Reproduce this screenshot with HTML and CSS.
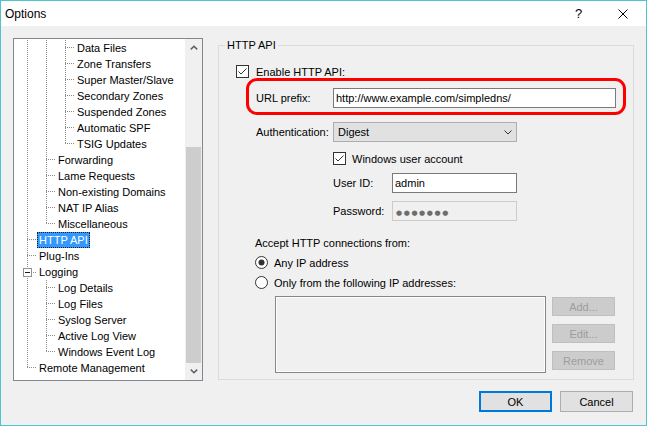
FILE: index.html
```html
<!DOCTYPE html>
<html lang="en">

<head>
    <meta charset="UTF-8">
    <meta name="viewport" content="width=device-width, initial-scale=1.0">
    <title>Options</title>
    <link rel="stylesheet" href="styles.css">
</head>

<body>
    <div class="window">
        <div class="titlebar">
            <span class="title">Options</span>
            <div class="caption-buttons">
                <span class="caption-btn help">?</span>
                <span class="caption-btn close">
                    <svg width="10" height="10" viewBox="0 0 10 10">
                        <path d="M0.5 0.5L9.5 9.5M9.5 0.5L0.5 9.5" stroke="#000" stroke-width="1" fill="none" />
                    </svg>
                </span>
            </div>
        </div>

        <div class="client">
            <div class="main">
                <!-- options tree -->
                <div class="tree">
                    <div class="tree-items">
                        <div class="row"><span class="pipe"></span><span class="pipe"></span><span class="branch"></span><span class="label">Data Files</span></div>
                        <div class="row"><span class="pipe"></span><span class="pipe"></span><span class="branch"></span><span class="label">Zone Transfers</span></div>
                        <div class="row"><span class="pipe"></span><span class="pipe"></span><span class="branch"></span><span class="label">Super Master/Slave</span></div>
                        <div class="row"><span class="pipe"></span><span class="pipe"></span><span class="branch"></span><span class="label">Secondary Zones</span></div>
                        <div class="row"><span class="pipe"></span><span class="pipe"></span><span class="branch"></span><span class="label">Suspended Zones</span></div>
                        <div class="row"><span class="pipe"></span><span class="pipe"></span><span class="branch"></span><span class="label">Automatic SPF</span></div>
                        <div class="row"><span class="pipe"></span><span class="pipe"></span><span class="branch last"></span><span class="label">TSIG Updates</span></div>
                        <div class="row"><span class="pipe"></span><span class="branch"></span><span class="label">Forwarding</span></div>
                        <div class="row"><span class="pipe"></span><span class="branch"></span><span class="label">Lame Requests</span></div>
                        <div class="row"><span class="pipe"></span><span class="branch"></span><span class="label">Non-existing Domains</span></div>
                        <div class="row"><span class="pipe"></span><span class="branch"></span><span class="label">NAT IP Alias</span></div>
                        <div class="row"><span class="pipe"></span><span class="branch last"></span><span class="label">Miscellaneous</span></div>
                        <div class="row"><span class="branch"></span><span class="label selected">HTTP API</span></div>
                        <div class="row"><span class="branch"></span><span class="label">Plug-Ins</span></div>
                        <div class="row">
                            <span class="toggle">
                                <svg width="9" height="9" viewBox="0 0 9 9">
                                    <rect x="0.5" y="0.5" width="8" height="8" fill="#fff" stroke="#919191" />
                                    <path d="M2 4.5H7" stroke="#1a1a1a" />
                                </svg>
                            </span>
                            <span class="label">Logging</span>
                        </div>
                        <div class="row"><span class="pipe"></span><span class="branch"></span><span class="label">Log Details</span></div>
                        <div class="row"><span class="pipe"></span><span class="branch"></span><span class="label">Log Files</span></div>
                        <div class="row"><span class="pipe"></span><span class="branch"></span><span class="label">Syslog Server</span></div>
                        <div class="row"><span class="pipe"></span><span class="branch"></span><span class="label">Active Log View</span></div>
                        <div class="row"><span class="pipe"></span><span class="branch last"></span><span class="label">Windows Event Log</span></div>
                        <div class="row"><span class="branch last"></span><span class="label">Remote Management</span></div>
                    </div>
                    <div class="scrollbar">
                        <div class="sb-btn">
                            <svg width="8" height="5" viewBox="0 0 8 5">
                                <path d="M0.8 4.4L4 1.2L7.2 4.4" stroke="#606060" stroke-width="1.5" fill="none" />
                            </svg>
                        </div>
                        <div class="sb-track">
                            <div class="sb-thumb"></div>
                        </div>
                        <div class="sb-btn">
                            <svg width="8" height="5" viewBox="0 0 8 5">
                                <path d="M0.8 0.6L4 3.8L7.2 0.6" stroke="#606060" stroke-width="1.5" fill="none" />
                            </svg>
                        </div>
                    </div>
                </div>

                <!-- HTTP API page -->
                <div class="group">
                    <div class="group-title">HTTP API</div>

                    <div class="check-row enable">
                        <svg class="checkbox" width="13" height="13" viewBox="0 0 13 13">
                            <rect x="0.5" y="0.5" width="12" height="12" fill="#fff" stroke="#333" />
                            <path d="M2.5 6.5L5 9L10.5 3.5" stroke="#333" fill="none" />
                        </svg>
                        <span>Enable HTTP API:</span>
                    </div>

                    <div class="url-box">
                        <span class="field-label">URL prefix:</span>
                        <div class="textbox url">http://www.example.com/simpledns/</div>
                    </div>

                    <div class="field-row auth">
                        <span class="field-label">Authentication:</span>
                        <div class="combo">
                            <span>Digest</span>
                            <svg width="8" height="5" viewBox="0 0 8 5">
                                <path d="M0.5 0.5L4 4L7.5 0.5" stroke="#333" fill="none" />
                            </svg>
                        </div>
                    </div>

                    <div class="sub">
                        <div class="check-row windows">
                            <svg class="checkbox" width="13" height="13" viewBox="0 0 13 13">
                                <rect x="0.5" y="0.5" width="12" height="12" fill="#fff" stroke="#333" />
                                <path d="M2.5 6.5L5 9L10.5 3.5" stroke="#333" fill="none" />
                            </svg>
                            <span>Windows user account</span>
                        </div>
                        <div class="field-row">
                            <span class="field-label short">User ID:</span>
                            <div class="textbox user">admin</div>
                        </div>
                        <div class="field-row">
                            <span class="field-label short">Password:</span>
                            <div class="textbox user disabled"><span class="dots">●●●●●●●</span></div>
                        </div>
                    </div>

                    <div class="accept">Accept HTTP connections from:</div>

                    <div class="radio-row first">
                        <svg width="13" height="13" viewBox="0 0 13 13">
                            <circle cx="6.5" cy="6.5" r="6" fill="#fff" stroke="#333" />
                            <circle cx="6.5" cy="6.5" r="3" fill="#333" />
                        </svg>
                        <span>Any IP address</span>
                    </div>
                    <div class="radio-row">
                        <svg width="13" height="13" viewBox="0 0 13 13">
                            <circle cx="6.5" cy="6.5" r="6" fill="#fff" stroke="#333" />
                        </svg>
                        <span>Only from the following IP addresses:</span>
                    </div>

                    <div class="ip-area">
                        <div class="ip-list"></div>
                        <div class="ip-buttons">
                            <button class="small-btn" disabled>Add...</button>
                            <button class="small-btn" disabled>Edit...</button>
                            <button class="small-btn" disabled>Remove</button>
                        </div>
                    </div>
                </div>
            </div>

            <div class="footer">
                <button class="btn default">OK</button>
                <button class="btn">Cancel</button>
            </div>
        </div>
    </div>
</body>

</html>
```

FILE: styles.css
```css
* {
    box-sizing: border-box;
}

body {
    margin: 0;
    font-family: "Liberation Sans", Arial, sans-serif;
    font-size: 11px;
    color: #000;
    background-color: #fff;
}

.window {
    width: 647px;
    height: 426px;
    border: 1px solid #4fc4ca;
    display: flex;
    flex-direction: column;
}

.titlebar {
    height: 25px;
    background-color: #fff;
    display: flex;
    align-items: center;
    justify-content: space-between;
}

.title {
    padding-left: 4px;
    font-size: 12px;
}

.caption-buttons {
    display: flex;
    height: 100%;
}

.caption-btn {
    width: 46px;
    display: flex;
    align-items: center;
    justify-content: center;
}

.help {
    font-size: 13px;
    padding-left: 3px;
}

.client {
    flex: 1;
    background-color: #f0f0f0;
    padding: 12px 12px 0;
}

.main {
    display: flex;
    gap: 15px;
}

/* tree view */
.tree {
    width: 190px;
    height: 343px;
    border: 1px solid #828790;
    background-color: #fff;
    display: flex;
}

.tree-items {
    flex: 1;
    padding-top: 1px;
    overflow: hidden;
}

.row {
    display: flex;
    height: 16px;
    padding-left: 13px;
}

.pipe {
    width: 19px;
    flex-shrink: 0;
    background: repeating-linear-gradient(to bottom, #8c8c8c 0 1px, transparent 1px 2px) left top / 1px 100% no-repeat;
}

.branch {
    width: 10px;
    flex-shrink: 0;
    background:
        repeating-linear-gradient(to bottom, #8c8c8c 0 1px, transparent 1px 2px) left top / 1px 100% no-repeat,
        repeating-linear-gradient(to right, #8c8c8c 0 1px, transparent 1px 2px) left 7px / 100% 1px no-repeat;
}

.branch.last {
    background:
        repeating-linear-gradient(to bottom, #8c8c8c 0 1px, transparent 1px 2px) left top / 1px 8px no-repeat,
        repeating-linear-gradient(to right, #8c8c8c 0 1px, transparent 1px 2px) left 7px / 100% 1px no-repeat;
}

.toggle {
    width: 14px;
    margin-left: -4px;
    flex-shrink: 0;
    padding-top: 4px;
    background:
        repeating-linear-gradient(to bottom, #8c8c8c 0 1px, transparent 1px 2px) 4px top / 1px 100% no-repeat,
        repeating-linear-gradient(to right, #8c8c8c 0 1px, transparent 1px 2px) 10px 8px / 4px 1px no-repeat;
}

.toggle svg {
    display: block;
}

.label {
    height: 16px;
    line-height: 14px;
    padding: 0 1px;
    border: 1px solid transparent;
    white-space: nowrap;
}

.label.selected {
    background-color: #3399ff;
    color: #fff;
    border: 1px dotted #1a1a1a;
}

.scrollbar {
    width: 17px;
    background-color: #f0f0f0;
    display: flex;
    flex-direction: column;
}

.sb-btn {
    height: 17px;
    display: flex;
    align-items: center;
    justify-content: center;
}

.sb-track {
    flex: 1;
    display: flex;
    flex-direction: column;
    justify-content: flex-end;
}

.sb-thumb {
    height: 216px;
    margin: 0 1px;
    background-color: #cdcdcd;
}

/* group box */
.group {
    width: 416px;
    height: 335px;
    margin-top: 7px;
    border: 1px solid #dcdcdc;
    padding-left: 17px;
}

.group-title {
    width: max-content;
    height: 13px;
    line-height: 13px;
    margin: -7px 0 0 -11px;
    padding: 0 2px;
    background-color: #f0f0f0;
}

.check-row {
    display: flex;
    align-items: center;
    height: 13px;
    gap: 7px;
}

.checkbox {
    display: block;
    flex-shrink: 0;
}

.enable {
    margin-top: 13px;
}

.url-box {
    width: 380px;
    height: 37px;
    margin-left: 10px;
    border: 3px solid #ff0000;
    border-radius: 11px;
    padding: 7px 0 0 7px;
    display: flex;
}

.field-label {
    width: 77px;
    flex-shrink: 0;
    line-height: 20px;
}

.field-label.short {
    width: 59px;
}

.textbox {
    height: 20px;
    line-height: 18px;
    padding: 0 2px;
    border: 1px solid #7a7a7a;
    background-color: #fff;
    white-space: nowrap;
}

.textbox.url {
    width: 283px;
}

.textbox.user {
    width: 125px;
}

.textbox.disabled {
    background-color: #f0f0f0;
    border-color: #cccccc;
    color: #6d6d6d;
}

.dots {
    font-family: "DejaVu Sans", sans-serif;
    font-size: 7px;
    letter-spacing: 1.6px;
    padding-left: 1px;
}

.field-row {
    display: flex;
    height: 20px;
}

.auth {
    margin-top: 7px;
    padding-left: 20px;
}

.combo {
    width: 184px;
    height: 20px;
    border: 1px solid #adadad;
    background-color: #e1e1e1;
    padding: 0 4px;
    display: flex;
    align-items: center;
    justify-content: space-between;
}

.sub {
    margin-left: 97px;
}

.windows {
    margin-top: 10px;
    gap: 6px;
}

.sub .field-row {
    margin-top: 8px;
}

.accept {
    margin: 16px 0 0 19px;
    height: 13px;
    line-height: 13px;
}

.radio-row {
    display: flex;
    align-items: center;
    gap: 6px;
    height: 13px;
    margin: 7px 0 0 19px;
}

.radio-row.first {
    margin-top: 6px;
}

.radio-row svg {
    display: block;
    flex-shrink: 0;
}

.ip-area {
    display: flex;
    gap: 6px;
    margin: 7px 0 0 39px;
}

.ip-list {
    width: 271px;
    height: 77px;
    border: 1px solid #828790;
    background-color: #f0f0f0;
    box-shadow: inset 0 0 0 1px #fff;
}

.ip-buttons {
    display: flex;
    flex-direction: column;
    gap: 8px;
    margin-top: 1px;
}

.small-btn {
    width: 63px;
    height: 19px;
    padding: 0;
    font-family: inherit;
    font-size: 11px;
    color: #9d9d9d;
    background-color: #cccccc;
    border: 1px solid #bfbfbf;
}

/* dialog buttons */
.footer {
    display: flex;
    justify-content: flex-end;
    gap: 8px;
    margin-top: 10px;
    padding-right: 1px;
}

.btn {
    width: 73px;
    height: 21px;
    padding: 0;
    font-family: inherit;
    font-size: 11px;
    color: #000;
    background-color: #e1e1e1;
    border: 1px solid #adadad;
}

.btn.default {
    border: 2px solid #0078d7;
}
```
